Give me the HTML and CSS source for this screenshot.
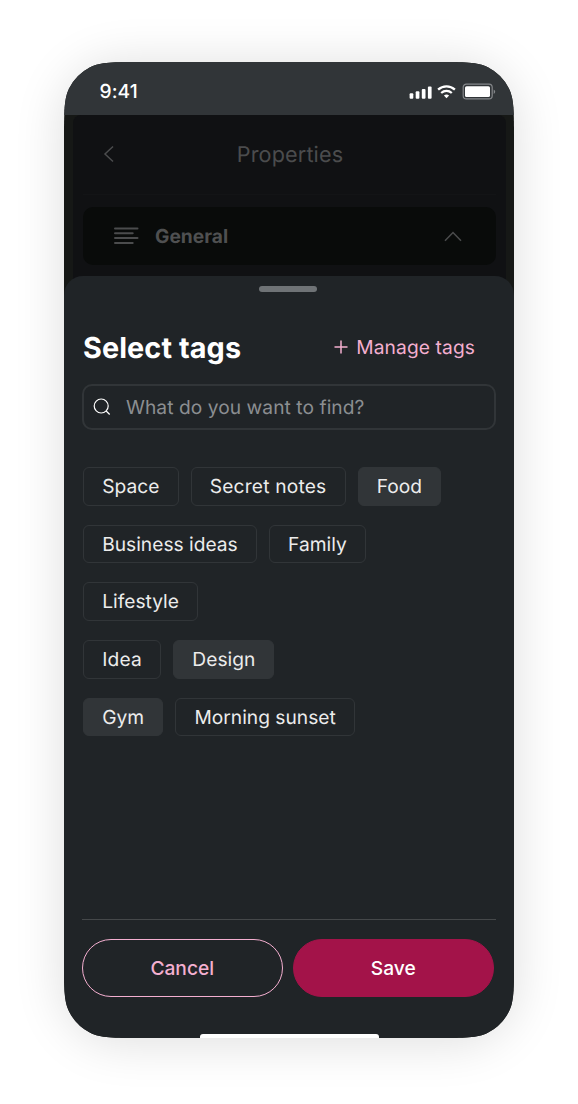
FILE: index.html
```html
<!DOCTYPE html>
<html lang="en">
<head>
<meta charset="utf-8">
<title>Select tags</title>
<link rel="stylesheet" href="styles.css">
</head>
<body>
<div class="shadow">
<main class="phone">
  <header class="status">
    <span class="time">9:41</span>
    <svg class="status-icons" width="88" height="20" viewBox="0 0 88 20">
      <g fill="#fff">
        <rect x="1.6" y="11.2" width="3.7" height="5.6" rx="1"/>
        <rect x="7.7" y="9.2" width="3.7" height="7.6" rx="1"/>
        <rect x="13.8" y="6.9" width="3.7" height="9.9" rx="1"/>
        <rect x="19.9" y="4.4" width="3.7" height="12.4" rx="1"/>
        <path d="M38.5 16.2l-2.6-2.6a4 4 0 0 1 5.2 0z"/>
        <rect x="57" y="4.2" width="25" height="10.8" rx="1.6"/>
      </g>
      <g fill="none" stroke="#fff" stroke-width="2.3">
        <path d="M30.1 7.7a12.3 12.3 0 0 1 16.8 0"/>
        <path d="M33.2 11a7.9 7.9 0 0 1 10.6 0"/>
      </g>
      <rect x="55.2" y="2.1" width="29" height="14.8" rx="3.2" fill="none" stroke="#84878a" stroke-width="1.2"/>
      <path d="M85.7 7.4v4.6q1.5-.7 1.5-2.3t-1.5-2.3z" fill="#84878a"/>
    </svg>
  </header>
  <section class="backdrop">
    <div class="page">
      <div class="nav">
        <svg class="back" width="12" height="18" viewBox="0 0 12 18"><path d="M10 1.5L2 9l8 7.5"/></svg>
        <h2 class="nav-title">Properties</h2>
      </div>
      <div class="general">
        <svg class="lines" width="25" height="18" viewBox="0 0 25 18"><path d="M1 1.5h22.5M1 6.2h17.7M1 11.1h22.5M1 16h17.7"/></svg>
        <span class="general-label">General</span>
        <svg class="up" width="18" height="11" viewBox="0 0 18 11"><path d="M1 9.7L9 1.5l8 8.2"/></svg>
      </div>
    </div>
  </section>
  <section class="sheet">
    <div class="handle"></div>
    <div class="heading">
      <h1 class="title">Select tags</h1>
      <a class="manage"><svg width="14" height="14" viewBox="0 0 14 14"><path d="M7 .5v13M.5 7h13"/></svg><span>Manage tags</span></a>
    </div>
    <div class="search">
      <svg width="18" height="18" viewBox="0 0 18 18"><circle cx="8.2" cy="8" r="7"/><path d="M13.2 13l3.5 3.5"/></svg>
      <span>What do you want to find?</span>
    </div>
    <div class="tags">
      <div class="row"><span class="tag">Space</span><span class="tag spaced">Secret notes</span><span class="tag selected">Food</span></div>
      <div class="row"><span class="tag">Business ideas</span><span class="tag">Family</span></div>
      <div class="row"><span class="tag">Lifestyle</span></div>
      <div class="row"><span class="tag spaced">Idea</span><span class="tag selected">Design</span></div>
      <div class="row"><span class="tag selected">Gym</span><span class="tag">Morning sunset</span></div>
    </div>
    <footer class="actions">
      <button class="btn cancel">Cancel</button>
      <button class="btn save">Save</button>
    </footer>
    <div class="home"></div>
  </section>
</main>
</div>
</body>
</html>
```
FILE: styles.css
```css
* { box-sizing: border-box; }
body {
  margin: 0;
  padding: 62px 64px 66px;
  height: 1104px;
  background: #fff;
  font-family: Inter, sans-serif;
  text-rendering: geometricPrecision;
  overflow: hidden;
}
h1, h2 { margin: 0; }
svg { display: block; flex: none; fill: none; }
.shadow {
  width: 450px;
  height: 976px;
  border-radius: 58px;
  box-shadow: 0 3px 48px 3px rgba(0, 0, 0, .125);
}
.phone {
  display: flex;
  flex-direction: column;
  width: 450px;
  height: 976px;
  background: #161816;
  clip-path: path("M0 76.8c0-26.88 0-40.32 5.23-50.59a48 48 0 0 1 20.98-20.98c10.27-5.23 23.71-5.23 50.59-5.23H373.2c26.88 0 40.32 0 50.59 5.23a48 48 0 0 1 20.98 20.98c5.23 10.27 5.23 23.71 5.23 50.59V899.2c0 26.88 0 40.32-5.23 50.59a48 48 0 0 1-20.98 20.98c-10.27 5.23-23.71 5.23-50.59 5.23H76.8c-26.88 0-40.32 0-50.59-5.23a48 48 0 0 1-20.98-20.98C0 939.52 0 926.08 0 899.2Z");
}
.status {
  display: flex;
  justify-content: space-between;
  align-items: flex-start;
  height: 53px;
  padding: 20px 18px 0 35.5px;
  background: #313538;
}
.time { color: #fff; font-size: 19.2px; line-height: 20px; font-weight: 500; letter-spacing: .1px; margin-top: -1px; }
.backdrop { height: 161px; padding: 0 8px 0 9px; }
.page { height: 186px; border-radius: 8px 8px 0 0; background: #101113; padding: 0 10px; }
.nav {
  display: flex;
  align-items: center;
  height: 80px;
  margin-bottom: 12px;
  padding-left: 20px;
  border-bottom: 1px solid #131416;
}
.back { stroke: #4b4c4d; stroke-width: 1.5; margin-bottom: 2px; }
.nav-title { flex: 1; padding-right: 31px; text-align: center; color: #4b4c4d; font-size: 21.6px; line-height: 26px; font-weight: 400; letter-spacing: .15px; }
.general {
  display: flex;
  align-items: center;
  height: 58px;
  padding: 0 34px 0 31px;
  border-radius: 10px;
  background: #090b0a;
}
.lines { stroke: #4b4c4d; stroke-width: 2; stroke-linecap: round; }
.general-label { flex: 1; padding-left: 16px; color: #4f5051; font-size: 19.2px; font-weight: 700; }
.up { stroke: #4b4c4d; stroke-width: 1.5; }
.sheet {
  display: flex;
  flex-direction: column;
  position: relative;
  height: 762px;
  padding: 10px 18px 0;
  border-radius: 19px 19px 0 0;
  background: #202427;
}
.handle { width: 58px; height: 6px; margin-left: 177.4px; border-radius: 3px; background: #6f7376; }
.heading { display: flex; justify-content: space-between; align-items: center; height: 40px; margin-top: 35px; padding: 0 21px 0 1px; }
.title { color: #fff; font-size: 28.8px; line-height: 41px; font-weight: 700; letter-spacing: .1px; }
.manage { display: flex; align-items: center; gap: 8px; color: #f4afd0; font-size: 19.2px; line-height: 24px; letter-spacing: .1px; }
.manage svg { stroke: #f4afd0; stroke-width: 1.5; }
.search {
  display: flex;
  align-items: center;
  height: 46px;
  margin-top: 17px;
  padding-left: 9px;
  border: 2px solid #313538;
  border-radius: 10px;
  color: #8b8e91;
  font-size: 19.2px;
  letter-spacing: .05px;
  gap: 15px;
}
.search svg { stroke: #fff; stroke-width: 1.2; }
.tags { display: grid; gap: 19.2px; margin: 37px 0 0 1px; }
.row { display: flex; gap: 12px; height: 38.5px; }
.tag {
  height: 38.5px;
  padding: 0 18.2px;
  border: 1px solid #313538;
  border-radius: 6px;
  color: #ececec;
  font-size: 19.2px;
  line-height: 37.4px;
  white-space: nowrap;
}
.spaced { letter-spacing: .18px; }
.selected { background: #313538; }
.actions {
  display: flex;
  gap: 9.6px;
  margin: auto 0 0 -.5px;
  padding: 19px 2px 41px 0;
  border-top: 1px solid #45484a;
}
.btn {
  flex: 1;
  height: 58px;
  padding: 0;
  border: 1.2px solid #f4afd0;
  border-radius: 29px;
  background: none;
  color: #f4afd0;
  font: 500 19.2px/57px Inter, sans-serif;
}
.save { border-color: #a31349; background: #a31349; color: #fff; }
.home { position: absolute; left: 136px; bottom: 0; width: 179px; height: 4px; border-radius: 3px 3px 0 0; background: #fff; }
```
